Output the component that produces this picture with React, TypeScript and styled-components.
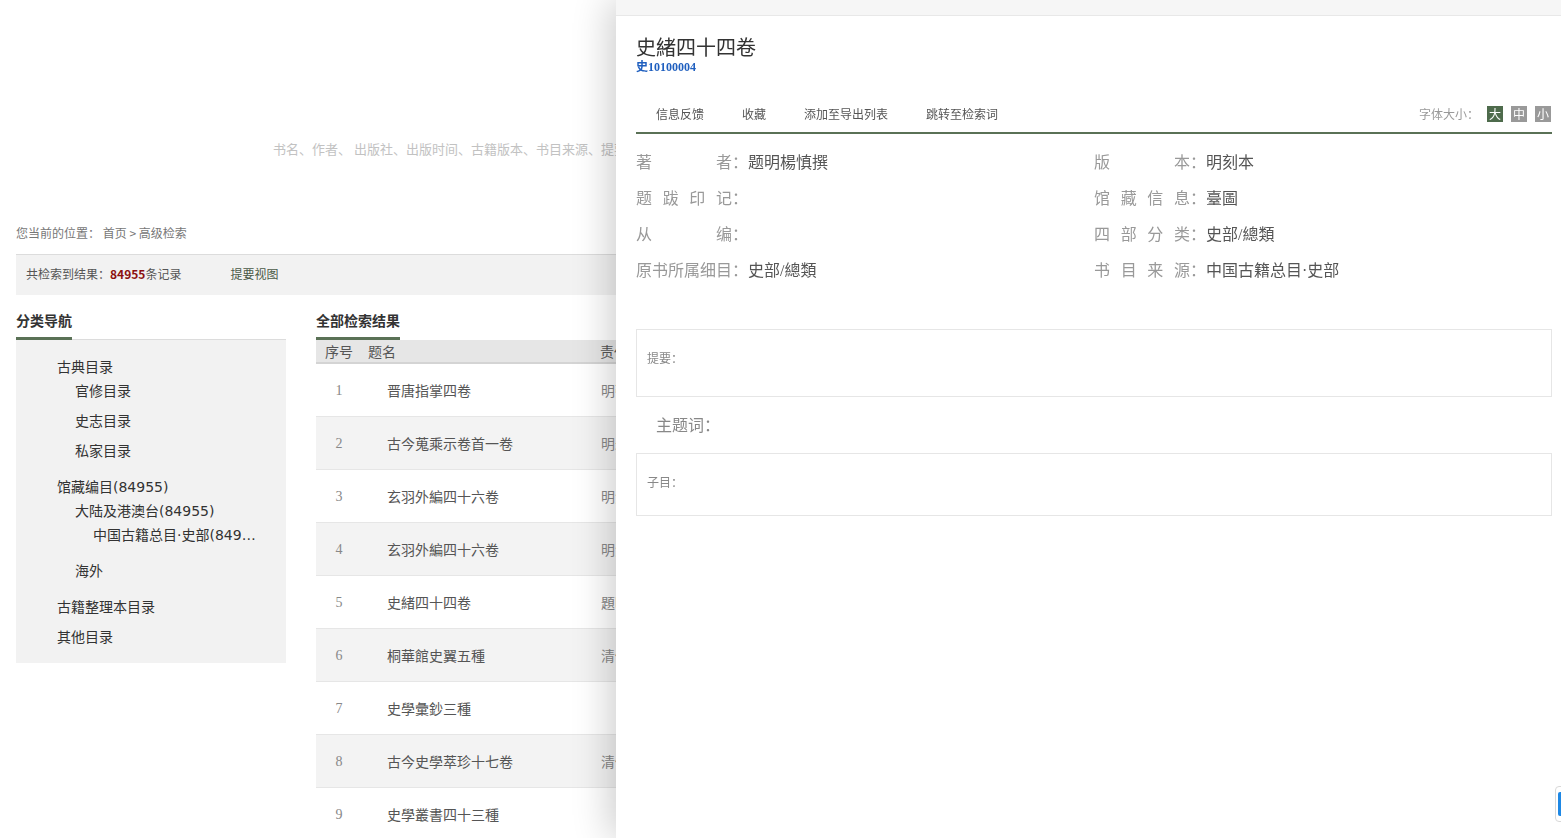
import React from "react";
import styled, { createGlobalStyle } from "styled-components";

const GREEN = "#5a7156";
const SANS = `"Noto Sans CJK SC", "Liberation Sans", sans-serif`;
const NAV_SANS = `"DejaVu Sans", "Noto Sans CJK SC", sans-serif`;
const SERIF = `"Liberation Serif", "Noto Sans CJK SC", serif`;

type NavItem = { label: string; level: number; gap: number };

const navItems: NavItem[] = [
  { label: "古典目录", level: 1, gap: 0 },
  { label: "官修目录", level: 2, gap: 0 },
  { label: "史志目录", level: 2, gap: 6 },
  { label: "私家目录", level: 2, gap: 6 },
  { label: "馆藏编目(84955)", level: 1, gap: 12 },
  { label: "大陆及港澳台(84955)", level: 2, gap: 0 },
  { label: "中国古籍总目·史部(84955)", level: 3, gap: 0 },
  { label: "海外", level: 2, gap: 12 },
  { label: "古籍整理本目录", level: 1, gap: 12 },
  { label: "其他目录", level: 1, gap: 6 },
];

const rows = [
  { no: 1, title: "晋唐指掌四卷", author: "明張大齡撰" },
  { no: 2, title: "古今蒐乘示卷首一卷", author: "明朱錦撰" },
  { no: 3, title: "玄羽外編四十六卷", author: "明沈懋孝撰" },
  { no: 4, title: "玄羽外編四十六卷", author: "明沈懋孝撰" },
  { no: 5, title: "史緒四十四卷", author: "題明楊慎撰" },
  { no: 6, title: "桐華館史翼五種", author: "清佚名輯" },
  { no: 7, title: "史學彙鈔三種", author: "" },
  { no: 8, title: "古今史學萃珍十七卷", author: "清佚名輯" },
  { no: 9, title: "史學叢書四十三種", author: "" },
];

// detail fields of the drawer, left column then right column
const fields: [string, string][] = [
  ["著者", "题明楊慎撰"],
  ["版本", "明刻本"],
  ["题跋印记", ""],
  ["馆藏信息", "臺圖"],
  ["从编", ""],
  ["四部分类", "史部/總類"],
  ["原书所属细目", "史部/總類"],
  ["书目来源", "中国古籍总目·史部"],
];

const App: React.FC = () => {
  return (
    <>
      <GlobalStyle />
      <Page>
        <SearchWrap>
          <SearchHint>
            书名、作者、 出版社、出版时间、古籍版本、书目来源、提要、主题词、子目
          </SearchHint>
        </SearchWrap>
        <Crumb>您当前的位置： 首页 &gt; 高级检索</Crumb>
        <ResultBar>
          共检索到结果：<Count>84955</Count>条记录
          <ViewLink>提要视图</ViewLink>
        </ResultBar>

        <Main>
          <Side>
            <SectionHead>
              <HeadTab>分类导航</HeadTab>
            </SectionHead>
            <NavPanel>
              {navItems.map((item) => (
                <NavRow key={item.label} $level={item.level} $gap={item.gap}>
                  {item.label}
                </NavRow>
              ))}
            </NavPanel>
          </Side>

          <Results>
            <SectionHead $plain>
              <HeadTab>全部检索结果</HeadTab>
            </SectionHead>
            <Table>
              <thead>
                <tr>
                  <HeadCell $w={46} $center>
                    序号
                  </HeadCell>
                  <HeadCell $w={238} $pad={6}>
                    题名
                  </HeadCell>
                  <HeadCell>责任者</HeadCell>
                </tr>
              </thead>
              <tbody>
                {rows.map((r) => (
                  <Row key={r.no} $alt={r.no % 2 === 0}>
                    <NumCell>{r.no}</NumCell>
                    <TitleCell>{r.title}</TitleCell>
                    <AuthorCell>{r.author}</AuthorCell>
                  </Row>
                ))}
              </tbody>
            </Table>
          </Results>
        </Main>
      </Page>

      <Drawer>
        <DrawerTop />
        <DrawerBody>
          <BookTitle>史緒四十四卷</BookTitle>
          <BookCode>史10100004</BookCode>

          <TabBar>
            <Tab>信息反馈</Tab>
            <Tab>收藏</Tab>
            <Tab>添加至导出列表</Tab>
            <Tab>跳转至检索词</Tab>
            <FontSizer>
              字体大小：
              <SizeBtn $active>大</SizeBtn>
              <SizeBtn>中</SizeBtn>
              <SizeBtn>小</SizeBtn>
            </FontSizer>
          </TabBar>

          <MetaGrid>
            {fields.map(([label, value]) => (
              <MetaRow key={label}>
                <MetaLabel>{label}</MetaLabel>
                <Colon>：</Colon>
                <MetaValue>{value}</MetaValue>
              </MetaRow>
            ))}
          </MetaGrid>

          <InfoBox $h={68}>提要：</InfoBox>
          <SubjectTitle>主题词：</SubjectTitle>
          <InfoBox $h={63} $flush>
            子目：
          </InfoBox>
        </DrawerBody>
      </Drawer>

      <SideWidget>
        <WidgetMark />
      </SideWidget>
    </>
  );
};

// CSS for the page

const GlobalStyle = createGlobalStyle`
  html, body {
    margin: 0;
    padding: 0;
    overflow: hidden;
    background: #fff;
    font-family: ${SANS};
  }
  * {
    box-sizing: border-box;
  }
`;

const Page = styled.div`
  width: 1561px;
  padding: 0 16px;
`;

const SearchWrap = styled.div`
  padding: 135px 0 0 257px;
`;

const SearchHint = styled.div`
  height: 28px;
  line-height: 28px;
  font-size: 13px;
  color: #c2c2c2;
  white-space: nowrap;
`;

const Crumb = styled.div`
  margin-top: 62px;
  line-height: 16px;
  font-size: 12px;
  color: #777;
`;

const ResultBar = styled.div`
  margin-top: 13px;
  height: 41px;
  line-height: 38px;
  padding-left: 10px;
  background: #f2f2f2;
  border-top: 1px solid #dcdcdc;
  font-size: 12px;
  color: #555;
`;

const Count = styled.span`
  color: #8b1010;
  font-weight: bold;
`;

const ViewLink = styled.span`
  margin-left: 49px;
  color: #4a5a47;
`;

const Main = styled.div`
  display: flex;
  gap: 30px;
`;

const Side = styled.div`
  width: 270px;
  flex-shrink: 0;
`;

const SectionHead = styled.div<{ $plain?: boolean }>`
  margin-top: 15px;
  display: flex;
  border-bottom: 1px solid ${(p) => (p.$plain ? "transparent" : "#dcdcdc")};
`;

const HeadTab = styled.span`
  font-size: 14px;
  line-height: 20px;
  font-weight: bold;
  color: #333;
  padding-bottom: 7px;
  border-bottom: 3px solid ${GREEN};
  margin-bottom: -1px;
`;

const NavPanel = styled.div`
  background: #f2f2f2;
  padding: 15px 25px 14px 0;
`;

const NavRow = styled.div<{ $level: number; $gap: number }>`
  margin-top: ${(p) => p.$gap}px;
  padding-left: ${(p) => 41 + (p.$level - 1) * 18}px;
  line-height: 24px;
  font-family: ${NAV_SANS};
  font-size: 14px;
  color: #333;
  white-space: nowrap;
  overflow: hidden;
  text-overflow: ellipsis;
`;

const Results = styled.div`
  flex: 1;
`;

const Table = styled.table`
  width: 100%;
  border-collapse: collapse;
`;

const HeadCell = styled.th<{ $w?: number; $center?: boolean; $pad?: number }>`
  width: ${(p) => (p.$w ? `${p.$w}px` : "auto")};
  height: 23px;
  padding: 0 0 0 ${(p) => p.$pad || 0}px;
  background: #e6e6e6;
  border-bottom: 2px solid #d4d4d4;
  font-size: 14px;
  font-weight: normal;
  color: #555;
  text-align: ${(p) => (p.$center ? "center" : "left")};
`;

const Row = styled.tr<{ $alt: boolean }>`
  height: 53px;
  background: ${(p) => (p.$alt ? "#f3f3f3" : "#fff")};
  border-bottom: 1px solid #e6e6e6;
`;

const NumCell = styled.td`
  padding-top: 3px;
  text-align: center;
  font-family: ${SERIF};
  font-size: 14px;
  color: #888;
`;

const TitleCell = styled.td`
  padding-left: 25px;
  font-family: ${SERIF};
  font-size: 14px;
  color: #555;
`;

const AuthorCell = styled.td`
  font-family: ${SERIF};
  font-size: 14px;
  color: #888;
`;

const Drawer = styled.div`
  position: fixed;
  top: 0;
  right: 0;
  bottom: 0;
  width: 945px;
  background: #fff;
  box-shadow: -6px 0 36px rgba(0, 0, 0, 0.2);
  font-family: ${SERIF};
`;

const DrawerTop = styled.div`
  height: 16px;
  background: #f6f6f6;
  border-bottom: 1px solid #e8e8e8;
`;

const DrawerBody = styled.div`
  padding: 0 9px 0 20px;
`;

const BookTitle = styled.div`
  margin-top: 20px;
  font-size: 20px;
  line-height: 24px;
  color: #333;
`;

const BookCode = styled.div`
  font-size: 12px;
  line-height: 14px;
  font-weight: bold;
  color: #1f5fbf;
`;

const TabBar = styled.div`
  margin-top: 22px;
  height: 38px;
  padding: 0 0 1px 1px;
  display: flex;
  align-items: center;
  border-bottom: 2px solid ${GREEN};
  font-family: ${SANS};
`;

const Tab = styled.span`
  padding: 0 19px;
  font-size: 12px;
  color: #555;
`;

const FontSizer = styled.div`
  margin-left: auto;
  display: flex;
  align-items: center;
  gap: 8px;
  font-size: 12px;
  color: #999;
  padding-right: 1px;
`;

const SizeBtn = styled.span<{ $active?: boolean }>`
  width: 16px;
  height: 16px;
  line-height: 16px;
  text-align: center;
  font-size: 12px;
  color: #fff;
  background: ${(p) => (p.$active ? "#4e6b4c" : "#999")};
`;

const MetaGrid = styled.div`
  padding-top: 11px;
  display: grid;
  grid-template-columns: 1fr 1fr;
`;

const MetaRow = styled.div`
  display: flex;
  height: 36px;
  line-height: 36px;
  font-size: 16px;
`;

const MetaLabel = styled.span`
  display: inline-block;
  width: 96px;
  text-align: justify;
  text-align-last: justify;
  color: #999;
`;

const Colon = styled.span`
  width: 16px;
  color: #999;
`;

const MetaValue = styled.span`
  color: #555;
`;

const InfoBox = styled.div<{ $h: number; $flush?: boolean }>`
  margin-top: ${(p) => (p.$flush ? 0 : 40)}px;
  height: ${(p) => p.$h}px;
  padding: 20px 10px 0;
  border: 1px solid #e6e6e6;
  line-height: 16px;
  font-size: 12px;
  color: #888;
  font-family: ${SANS};
`;

const SubjectTitle = styled.div`
  padding: 17px 0 15px 20px;
  line-height: 24px;
  font-size: 16px;
  color: #888;
`;

const SideWidget = styled.div`
  position: fixed;
  right: -36px;
  top: 786px;
  width: 42px;
  height: 36px;
  background: #fff;
  border: 1px solid #d8d8d8;
  border-radius: 4px;
  padding: 5px 0 0 2px;
`;

const WidgetMark = styled.div`
  width: 24px;
  height: 24px;
  background: #1e88e5;
  border-radius: 2px;
`;

export default App;
